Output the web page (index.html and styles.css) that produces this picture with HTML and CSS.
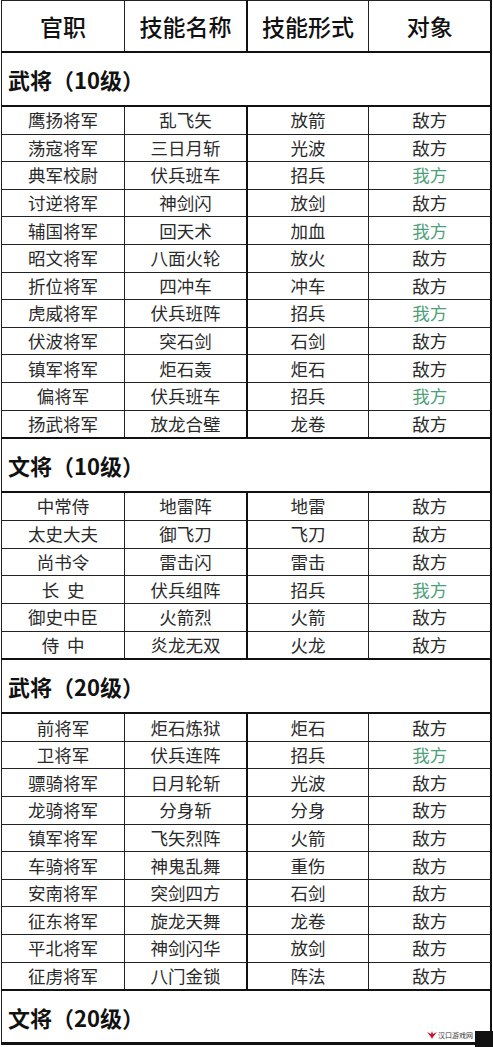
FILE: index.html
```html
<!DOCTYPE html>
<html lang="zh">
<head>
<meta charset="utf-8">
<link rel="stylesheet" href="styles.css">
</head>
<body>
<div class="page">
<table class="grid">
  <colgroup><col class="c1"><col class="c2"><col class="c3"><col class="c4"></colgroup>
  <tr class="head"><th>官职</th><th>技能名称</th><th class="mid">技能形式</th><th>对象</th></tr>
  <tr class="sec"><td colspan="4">武将（10级）</td></tr>
  <tr class="row r1"><td>鹰扬将军</td><td>乱飞矢</td><td class="mid">放箭</td><td>敌方</td></tr>
  <tr class="row r1"><td>荡寇将军</td><td>三日月斩</td><td class="mid">光波</td><td>敌方</td></tr>
  <tr class="row r1"><td>典军校尉</td><td>伏兵班车</td><td class="mid">招兵</td><td class="our">我方</td></tr>
  <tr class="row r1"><td>讨逆将军</td><td>神剑闪</td><td class="mid">放剑</td><td>敌方</td></tr>
  <tr class="row r1"><td>辅国将军</td><td>回天术</td><td class="mid">加血</td><td class="our">我方</td></tr>
  <tr class="row r1"><td>昭文将军</td><td>八面火轮</td><td class="mid">放火</td><td>敌方</td></tr>
  <tr class="row r1"><td>折位将军</td><td>四冲车</td><td class="mid">冲车</td><td>敌方</td></tr>
  <tr class="row r1"><td>虎威将军</td><td>伏兵班阵</td><td class="mid">招兵</td><td class="our">我方</td></tr>
  <tr class="row r1"><td>伏波将军</td><td>突石剑</td><td class="mid">石剑</td><td>敌方</td></tr>
  <tr class="row r1"><td>镇军将军</td><td>炬石轰</td><td class="mid">炬石</td><td>敌方</td></tr>
  <tr class="row r1"><td>偏将军</td><td>伏兵班车</td><td class="mid">招兵</td><td class="our">我方</td></tr>
  <tr class="row r1 last"><td>扬武将军</td><td>放龙合璧</td><td class="mid">龙卷</td><td>敌方</td></tr>
  <tr class="sec"><td colspan="4">文将（10级）</td></tr>
  <tr class="row r2"><td>中常侍</td><td>地雷阵</td><td class="mid">地雷</td><td>敌方</td></tr>
  <tr class="row r2"><td>太史大夫</td><td>御飞刀</td><td class="mid">飞刀</td><td>敌方</td></tr>
  <tr class="row r2"><td>尚书令</td><td>雷击闪</td><td class="mid">雷击</td><td>敌方</td></tr>
  <tr class="row r2"><td>长&nbsp;&nbsp;史</td><td>伏兵组阵</td><td class="mid">招兵</td><td class="our">我方</td></tr>
  <tr class="row r2"><td>御史中臣</td><td>火箭烈</td><td class="mid">火箭</td><td>敌方</td></tr>
  <tr class="row r2 last"><td>侍&nbsp;&nbsp;中</td><td>炎龙无双</td><td class="mid">火龙</td><td>敌方</td></tr>
  <tr class="sec"><td colspan="4">武将（20级）</td></tr>
  <tr class="row r3"><td>前将军</td><td>炬石炼狱</td><td class="mid">炬石</td><td>敌方</td></tr>
  <tr class="row r3"><td>卫将军</td><td>伏兵连阵</td><td class="mid">招兵</td><td class="our">我方</td></tr>
  <tr class="row r3"><td>骠骑将军</td><td>日月轮斩</td><td class="mid">光波</td><td>敌方</td></tr>
  <tr class="row r3"><td>龙骑将军</td><td>分身斩</td><td class="mid">分身</td><td>敌方</td></tr>
  <tr class="row r3"><td>镇军将军</td><td>飞矢烈阵</td><td class="mid">火箭</td><td>敌方</td></tr>
  <tr class="row r3"><td>车骑将军</td><td>神鬼乱舞</td><td class="mid">重伤</td><td>敌方</td></tr>
  <tr class="row r3"><td>安南将军</td><td>突剑四方</td><td class="mid">石剑</td><td>敌方</td></tr>
  <tr class="row r3"><td>征东将军</td><td>旋龙天舞</td><td class="mid">龙卷</td><td>敌方</td></tr>
  <tr class="row r3"><td>平北将军</td><td>神剑闪华</td><td class="mid">放剑</td><td>敌方</td></tr>
  <tr class="row r3 last"><td>征虏将军</td><td>八门金锁</td><td class="mid">阵法</td><td>敌方</td></tr>
  <tr class="sec endsec"><td colspan="4">文将（20级）</td></tr>
</table>
<div class="mark">
  <span class="logo"><svg width="10" height="8" viewBox="0 0 10 8"><path d="M0 1 L4 3 L5 0 L6 3 L10 1 L6 6 L5 8 L4 6 Z" fill="#c8102e"/></svg><span class="mtext">汉口游戏网</span></span>
  <span class="blk"></span>
</div>
</div>
</body>
</html>
```
FILE: styles.css
```css
html, body {
  margin: 0;
  padding: 0;
  background: #fff;
}
.page {
  position: relative;
  width: 493px;
  height: 1047px;
  overflow: hidden;
}
.grid {
  border-collapse: collapse;
  table-layout: fixed;
  width: 491px;
  margin-left: 1px;
  font-family: "Noto Sans CJK SC", "Noto Sans", sans-serif;
  border-top: 1px solid #111;
  border-left: 1px solid #111;
  border-right: 2px solid #111;
}
.c1 { width: 123px; }
.c2 { width: 122px; }
.c3 { width: 122px; }
.c4 { width: 122px; }
th, td {
  padding: 0;
  text-align: center;
  vertical-align: middle;
  border: 1px solid #222;
  overflow: hidden;
  white-space: nowrap;
}
td.mid, th.mid {
  border-left: 2px solid #111;
}
.head th {
  height: 50px;
  font-size: 23px;
  font-weight: 500;
  color: #111;
  border-bottom: 2px solid #111;
}
.sec td {
  height: 52px;
  text-align: left;
  padding-left: 6px;
  font-size: 22px;
  font-weight: 700;
  color: #111;
  border-bottom: 2px solid #111;
}
.endsec td {
  height: 51px;
  border-bottom: 3px solid #111;
}
.row td {
  font-size: 17.5px;
  color: #2a2a2a;
  line-height: 20px;
}
.r1 td { height: 26.6px; }
.r2 td { height: 26.7px; }
.r3 td { height: 26.6px; }
.row.last td { border-bottom: 2px solid #111; }
.row td.our {
  color: #4f9f7a;
}
.mark {
  position: absolute;
  right: 0;
  bottom: 0;
  display: flex;
  align-items: flex-end;
}
.logo {
  display: flex;
  align-items: center;
  gap: 1px;
  background: #fff;
  height: 12px;
  padding: 0 2px;
  margin-bottom: 6px;
}
.mtext {
  font-family: "Noto Sans CJK SC", sans-serif;
  font-size: 7px;
  line-height: 8px;
  color: #333;
}
.blk {
  width: 18px;
  height: 16px;
  background: #111;
}
```
